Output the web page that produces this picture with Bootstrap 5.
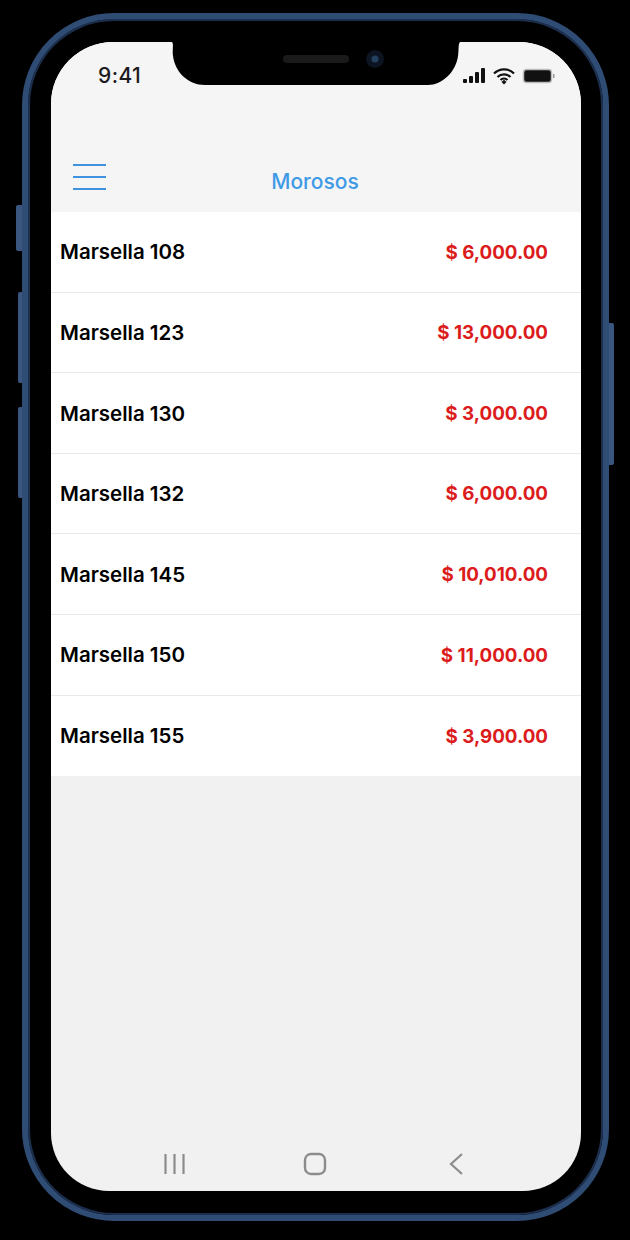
<!DOCTYPE html>
<html lang="en">
<head>
    <meta charset="UTF-8">
    <meta name="viewport" content="width=device-width, initial-scale=1.0">
    <title>Morosos</title>
    <link href="https://cdn.jsdelivr.net/npm/bootstrap@5.3.3/dist/css/bootstrap.min.css" rel="stylesheet">
    <style>
        body {
            background-color: #000;
            font-family: "Inter", "Liberation Sans", sans-serif;
            padding: 13px 0 0 22px;
            overflow: hidden;
        }
        .phone-frame {
            position: relative;
            width: 587px;
            height: 1208px;
            padding: 23px 22px 24px 23px;
            background-color: #000;
            border: 6px solid #2f4c74;
            border-radius: 92px;
            box-shadow: inset 0 0 0 2px #1c2f4e;
        }
        .side-btn {
            position: absolute;
            background-color: #3a567f;
        }
        .btn-a { left: -12px; top: 186px; width: 6px; height: 46px; border-radius: 2px 0 0 2px; }
        .btn-b { left: -10px; top: 273px; width: 4px; height: 91px; border-radius: 2px 0 0 2px; }
        .btn-c { left: -10px; top: 388px; width: 4px; height: 91px; border-radius: 2px 0 0 2px; }
        .btn-d { right: -11px; top: 304px; width: 5px; height: 142px; border-radius: 0 2px 2px 0; }
        .phone-screen {
            height: 100%;
            overflow: hidden;
            background-color: #f1f1f2;
            border-radius: 62px 62px 58px 58px;
        }
        .notch-shape {
            position: absolute;
            left: 144px;
            top: 23px;
            width: 288px;
            height: 43px;
        }
        .status-time {
            position: absolute;
            left: 70px;
            top: 45px;
            font-size: 21px;
            font-weight: 500;
            line-height: 24px;
            color: #1c1c1e;
            letter-spacing: 0.4px;
        }
        .status-icons {
            position: absolute;
            left: 435px;
            top: 48px;
        }
        .top-bar {
            height: 170px;
            padding: 100px 0 0 22px;
            background-color: #f5f5f6;
        }
        .menu-icon { width: 33px; height: 26px; flex-shrink: 0; }
        .top-title {
            flex: 1;
            margin-top: 10px;
            padding-right: 57px;
            text-align: center;
            font-size: 21px;
            font-weight: 500;
            line-height: 24px;
            color: #3f9ae6;
        }
        .debt-list .list-group-item {
            height: 80.6px;
            padding: 2px 33px 0 9px;
            font-size: 20.5px;
            font-weight: 600;
            color: #000;
            border-color: #e9e9ea;
        }
        .debt-amount {
            font-size: 18.8px;
            font-weight: 700;
            color: #dc1c1c;
        }
        .nav-keys {
            height: 39px;
            margin-right: 2px;
        }
        .nav-key {
            width: 141px;
            height: 24px;
        }
    </style>
</head>
<body>
<div class="phone-frame">
    <div class="side-btn btn-a"></div>
    <div class="side-btn btn-b"></div>
    <div class="side-btn btn-c"></div>
    <div class="side-btn btn-d"></div>

    <div class="phone-screen d-flex flex-column">
        <div class="top-bar d-flex align-items-center">
            <svg class="menu-icon" viewBox="0 0 33 26">
                <path d="M0 1H33M0 13H33M0 25H33" stroke="#3f92de" stroke-width="2" fill="none"/>
            </svg>
            <div class="top-title">Morosos</div>
        </div>

        <ul class="list-group list-group-flush debt-list rounded-0">
            <li class="list-group-item d-flex justify-content-between align-items-center"><span>Marsella 108</span><span class="debt-amount">$ 6,000.00</span></li>
            <li class="list-group-item d-flex justify-content-between align-items-center"><span>Marsella 123</span><span class="debt-amount">$ 13,000.00</span></li>
            <li class="list-group-item d-flex justify-content-between align-items-center"><span>Marsella 130</span><span class="debt-amount">$ 3,000.00</span></li>
            <li class="list-group-item d-flex justify-content-between align-items-center"><span>Marsella 132</span><span class="debt-amount">$ 6,000.00</span></li>
            <li class="list-group-item d-flex justify-content-between align-items-center"><span>Marsella 145</span><span class="debt-amount">$ 10,010.00</span></li>
            <li class="list-group-item d-flex justify-content-between align-items-center"><span>Marsella 150</span><span class="debt-amount">$ 11,000.00</span></li>
            <li class="list-group-item d-flex justify-content-between align-items-center"><span>Marsella 155</span><span class="debt-amount">$ 3,900.00</span></li>
        </ul>

        <div class="nav-keys mt-auto d-flex justify-content-center align-items-start">
            <svg class="nav-key" viewBox="0 0 141 24">
                <path d="M61.5 2V22M70.5 2V22M79.5 2V22" stroke="#8c8c8c" stroke-width="2.2" fill="none"/>
            </svg>
            <svg class="nav-key" viewBox="0 0 141 24">
                <rect x="60" y="2" width="20" height="20" rx="6" stroke="#8c8c8c" stroke-width="2.4" fill="none"/>
            </svg>
            <svg class="nav-key" viewBox="0 0 141 24">
                <path d="M76 2L65 12L76 22" stroke="#8c8c8c" stroke-width="2.2" fill="none"/>
            </svg>
        </div>
    </div>

    <svg class="notch-shape" viewBox="0 0 288 43">
        <path d="M0 0H288C286 2 287 8 286 14C284 30 270 43 256 43H33C16 43 3 30 1 14C0 8 2 2 0 0Z" fill="#000"/>
        <rect x="111" y="13" width="66" height="8" rx="4" fill="#1a1a1a"/>
        <circle cx="203" cy="17" r="9" fill="#0b1420"/>
        <circle cx="203" cy="17" r="3.5" fill="#24405f"/>
    </svg>

    <div class="status-time">9:41</div>

    <svg class="status-icons" width="92" height="20" viewBox="0 0 92 20">
        <rect x="0" y="12" width="4" height="4" rx="1" fill="#111"/>
        <rect x="6" y="9" width="4" height="7" rx="1" fill="#111"/>
        <rect x="12" y="5" width="4" height="11" rx="1" fill="#111"/>
        <rect x="18" y="1" width="4" height="15" rx="1" fill="#111"/>
        <path d="M31 6.500A14 14 0 0 1 51 6.500M34.500 10A9.500 9.500 0 0 1 47.500 10M37.500 13A5 5 0 0 1 44.500 13" stroke="#111" stroke-width="2.200" fill="none"/>
        <path d="M38.500 15L41 12.800L43.500 15L41 17.500Z" fill="#111"/>
        <rect x="60.500" y="2.500" width="28" height="13" rx="3" fill="#111" stroke="#bdbdbd" stroke-width="1.500"/>
        <rect x="90" y="7" width="1.500" height="4" fill="#9a9a9a"/>
    </svg>
</div>

<script src="https://cdn.jsdelivr.net/npm/bootstrap@5.3.3/dist/js/bootstrap.bundle.min.js"></script>
</body>
</html>
